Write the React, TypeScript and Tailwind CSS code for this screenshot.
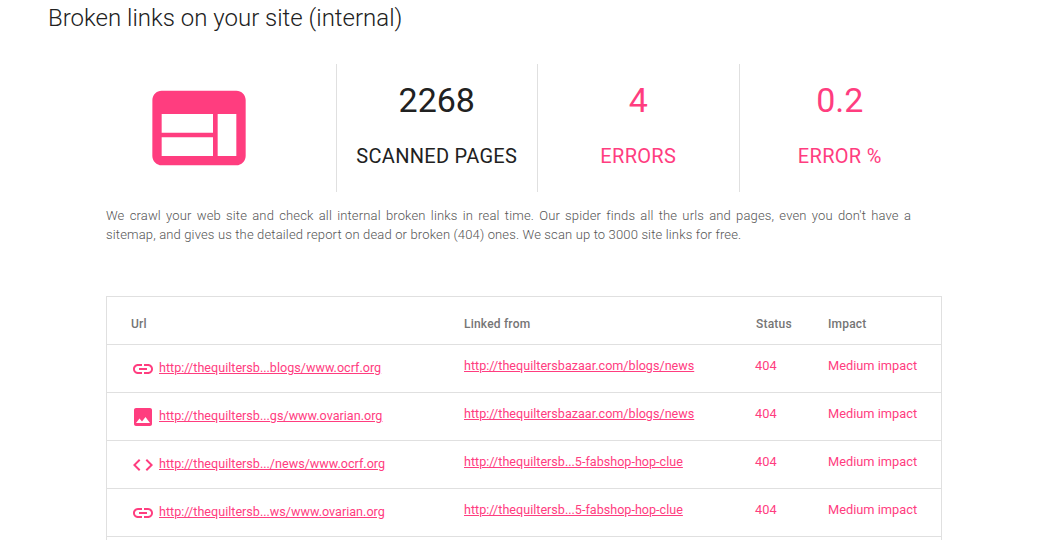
const pink = "text-[#ff3d7f]";

const LinkIcon = () => (
  <svg width="24" height="24" viewBox="0 0 24 24" fill="currentColor">
    <path d="M3.9 12c0-1.71 1.39-3.1 3.1-3.1h4V7H7c-2.76 0-5 2.24-5 5s2.24 5 5 5h4v-1.9H7c-1.71 0-3.1-1.39-3.1-3.1zM8 13h8v-2H8v2zm9-6h-4v1.9h4c1.71 0 3.1 1.39 3.1 3.1s-1.39 3.1-3.1 3.1h-4V17h4c2.76 0 5-2.24 5-5s-2.24-5-5-5z" />
  </svg>
);

const ImageIcon = () => (
  <svg width="24" height="24" viewBox="0 0 24 24" fill="currentColor">
    <path d="M21 19V5c0-1.1-.9-2-2-2H5c-1.1 0-2 .9-2 2v14c0 1.1.9 2 2 2h14c1.1 0 2-.9 2-2zM8.5 13.5l2.5 3.01L14.5 12l4.5 6H5l3.5-4.5z" />
  </svg>
);

const CodeIcon = () => (
  <svg width="24" height="24" viewBox="0 0 24 24" fill="currentColor">
    <path d="M9.4 16.6L4.8 12l4.6-4.6L8 6l-6 6 6 6 1.4-1.4zm5.2 0l4.6-4.6-4.6-4.6L16 6l6 6-6 6-1.4-1.4z" />
  </svg>
);

const rows = [
  { icon: <LinkIcon />, url: "http://thequiltersb...blogs/www.ocrf.org", from: "http://thequiltersbazaar.com/blogs/news" },
  { icon: <ImageIcon />, url: "http://thequiltersb...gs/www.ovarian.org", from: "http://thequiltersbazaar.com/blogs/news" },
  { icon: <CodeIcon />, url: "http://thequiltersb.../news/www.ocrf.org", from: "http://thequiltersb...5-fabshop-hop-clue" },
  { icon: <LinkIcon />, url: "http://thequiltersb...ws/www.ovarian.org", from: "http://thequiltersb...5-fabshop-hop-clue" },
];

const Stat = ({ value, label, color }: { value: string; label: string; color: string }) => (
  <div className={`w-[201.5px] h-[128px] border-l border-[#e0e0e0] flex flex-col items-center ${color}`}>
    <div className="text-[34px] leading-[40px] mt-[16px]">{value}</div>
    <div className="text-[20px] tracking-[0.3px] leading-[24px] mt-[24px]">{label}</div>
  </div>
);

export default function App() {
  return (
    <div className="w-[1050px] h-[540px] overflow-hidden bg-white font-['Roboto',sans-serif]">
      <h1 className="pl-[48px] text-[24px] leading-[36px] font-light text-[#212121]">
        Broken links on your site (internal)
      </h1>

      <div className="flex mt-[28px] ml-[135.5px]">
        <div className={`w-[200px] h-[128px] pt-[8px] pl-[7px] ${pink}`}>
          <svg width="112" height="112" viewBox="0 0 24 24" fill="currentColor">
            <path d="M20 4H4c-1.1 0-1.99.9-1.99 2L2 18c0 1.1.9 2 2 2h16c1.1 0 2-.9 2-2V6c0-1.1-.9-2-2-2zm-5 14H4v-4h11v4zm0-5H4V9h11v4zm5 5h-4V9h4v9z" />
          </svg>
        </div>
        <Stat value="2268" label="SCANNED PAGES" color="text-[#212121]" />
        <Stat value="4" label="ERRORS" color={pink} />
        <Stat value="0.2" label="ERROR %" color={pink} />
      </div>

      <p className="ml-[106px] mt-[15px] w-[805px] text-[13px] tracking-[0.15px] leading-[18.5px] font-light text-[#555555]">
        <span className="block text-justify [text-align-last:justify]">
          We crawl your web site and check all internal broken links in real time. Our spider finds all the urls and pages, even you don't have a
        </span>
        <span className="block">
          sitemap, and gives us the detailed report on dead or broken (404) ones. We scan up to 3000 site links for free.
        </span>
      </p>

      <div className="ml-[106px] mt-[52px] w-[836px] border-t border-x border-[#e0e0e0]">
        <div className="flex items-center h-[48px] pt-[6px] border-b border-[#e0e0e0] text-[12px] tracking-[0.2px] font-medium text-[#757575]">
          <div className="w-[357px] pl-[24px]">Url</div>
          <div className="w-[292px]">Linked from</div>
          <div className="w-[72px]">Status</div>
          <div>Impact</div>
        </div>
        {rows.map((r, i) => (
          <div key={i} className={`flex items-center h-[48px] border-b border-[#e0e0e0] text-[12.8px] ${pink}`}>
            <div className="w-[357px] pl-[24px] flex items-center gap-[4px] text-[12.6px]">
              <span className="w-[24px] h-[24px]">{r.icon}</span>
              <a className="underline">{r.url}</a>
            </div>
            <div className="w-[291px] -mt-[5px] text-[12.6px]">
              <a className="underline">{r.from}</a>
            </div>
            <div className="w-[73px] -mt-[5px]">404</div>
            <div className="-mt-[5px]">Medium impact</div>
          </div>
        ))}
        <div className="h-[48px]" />
      </div>
    </div>
  );
}
